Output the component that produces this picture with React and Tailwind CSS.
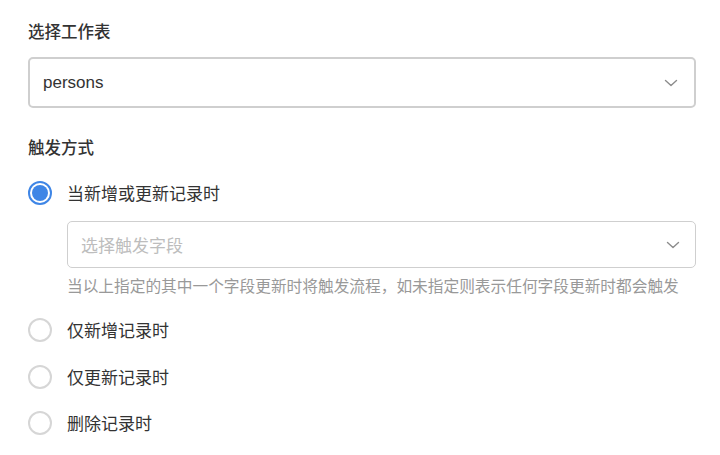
import React from "react";

const Chevron = () => (
  <svg width="14" height="8" viewBox="0 0 14 8" fill="none" className="shrink-0">
    <path d="M1.5 1.5 L7 6.5 L12.5 1.5" stroke="#8c8c8c" strokeWidth="1.4" strokeLinecap="round" strokeLinejoin="round" />
  </svg>
);

const Radio = ({ checked, label }) => (
  <div className="flex items-center h-[24px]">
    {checked ? (
      <div className="w-[24px] h-[24px] rounded-full border-2 border-[#3f86e6] flex items-center justify-center shrink-0">
        <div className="w-[16px] h-[16px] rounded-full bg-[#3f86e6]" />
      </div>
    ) : (
      <div className="w-[24px] h-[24px] rounded-full border-2 border-[#d6d6d6] shrink-0" />
    )}
    <span className="ml-[15px] text-[17px] text-[#333]">{label}</span>
  </div>
);

export default function App() {
  return (
    <div
      className="w-[720px] h-[455px] bg-white pl-[28px] pr-[24px] pt-[20px]"
      style={{ fontFamily: '"Noto Sans CJK SC", "Noto Sans", sans-serif' }}
    >
      <div className="text-[16.5px] font-medium text-[#333] leading-[22px]">选择工作表</div>
      <div className="mt-[15px] h-[51px] border-2 border-[#cfcfcf] rounded-[5px] flex items-center justify-between pl-[13px] pr-[16px]">
        <span className="text-[17px] text-[#333]" style={{ fontFamily: '"Liberation Sans", Arial, sans-serif' }}>persons</span>
        <Chevron />
      </div>

      <div className="mt-[28px] text-[16.5px] font-medium text-[#333] leading-[22px]">触发方式</div>

      <div className="mt-[23px]">
        <Radio checked label="当新增或更新记录时" />
      </div>

      <div className="ml-[39px] mt-[16px] h-[47px] border border-[#cfcfcf] rounded-[5px] flex items-center justify-between pl-[13px] pr-[15px]">
        <span className="text-[17px] text-[#bdbdbd]">选择触发字段</span>
        <Chevron />
      </div>
      <div className="ml-[39px] mt-[6px] text-[15.7px] text-[#999] leading-[24px] whitespace-nowrap">
        当以上指定的其中一个字段更新时将触发流程，如未指定则表示任何字段更新时都会触发
      </div>

      <div className="mt-[20px] flex flex-col gap-[22.5px]">
        <Radio label="仅新增记录时" />
        <Radio label="仅更新记录时" />
        <Radio label="删除记录时" />
      </div>
    </div>
  );
}
